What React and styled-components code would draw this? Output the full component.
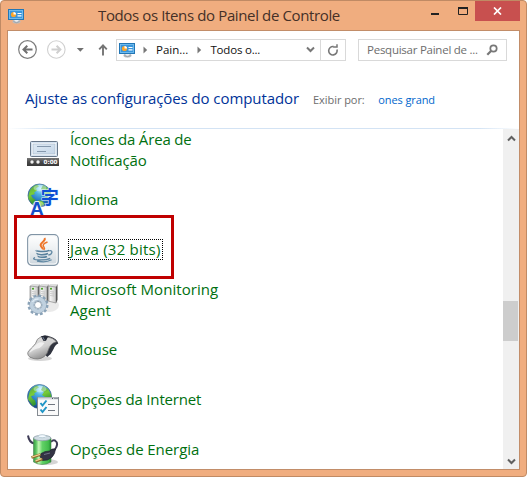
import React from "react";
import styled, { createGlobalStyle } from "styled-components";

const Global = createGlobalStyle`
  *, *::before, *::after { box-sizing: border-box; }
  html, body { margin: 0; padding: 0; background: #fff; overflow: hidden; }
  body { font-family: "Open Sans", "Noto Sans", sans-serif; }
  svg { display: block; flex: none; }
`;

const Window = styled.div`
  position: relative;
  width: 527px;
  height: 477px;
  display: flex;
  flex-direction: column;
  background: #f0ad7f;
  border: 1px solid #c08a64;
  border-radius: 4px;
  padding: 0 6px 6px 6px;
`;
const TitleBar = styled.header`
  height: 29px;
  flex: none;
  display: flex;
  align-items: flex-start;
  padding-left: 1px;
`;
const TitleIcon = styled.div`
  padding-top: 7px;
  width: 16px;
`;
const Title = styled.h1`
  margin: 0 0 0 74px;
  width: 322px;
  flex: none;
  font-size: 15px;
  font-weight: 400;
  line-height: 20px;
  padding-top: 4px;
  letter-spacing: -0.37px;
  white-space: nowrap;
  color: #453027;
`;
const Caption = styled.button`
  border: 0;
  padding: 0;
  flex: none;
  width: ${(p) => p.$w}px;
  height: 20px;
  display: flex;
  align-items: center;
  justify-content: center;
  background: ${(p) => (p.$close ? "#c8504f" : "transparent")};
`;
const Client = styled.main`
  flex: 1;
  min-height: 0;
  display: flex;
  flex-direction: column;
  background: #fff;
  border: 1px solid #c28d69;
`;
const Toolbar = styled.nav`
  height: 37px;
  flex: none;
  display: flex;
  align-items: center;
  padding-left: 10px;
`;
const NavIcons = styled.div`
  width: 98px;
  height: 22px;
`;
const Address = styled.div`
  width: 230px;
  height: 22px;
  display: flex;
  align-items: center;
  border: 1px solid #d9d9d9;
  padding-left: 2px;
`;
const Separator = styled.div`
  margin-left: ${(p) => p.$before || 0}px;
  margin-right: 8px;
`;
const Crumb = styled.span`
  width: ${(p) => p.$w}px;
  font-size: 11.5px;
  line-height: 20px;
  letter-spacing: ${(p) => p.$track || 0}px;
  white-space: nowrap;
  color: #111;
`;
const Refresh = styled.div`
  width: 25px;
  height: 20px;
  margin-left: 5px;
  display: flex;
  align-items: center;
  justify-content: center;
  border-left: 1px solid #d9d9d9;
`;
const Search = styled.div`
  width: 149px;
  height: 22px;
  margin-left: 12px;
  padding: 0 8px;
  display: flex;
  align-items: center;
  justify-content: space-between;
  border: 1px solid #d9d9d9;
  font-size: 11.5px;
  letter-spacing: -0.25px;
  white-space: nowrap;
  color: #6d6d6d;
`;
const Heading = styled.section`
  height: 61px;
  flex: none;
  display: flex;
  align-items: baseline;
  padding: 19px 0 0 17px;
  white-space: nowrap;
  background: linear-gradient(90deg, #fff, #d3e3f4 8%, #d3e3f4 92%, #fff) bottom / 100% 1px no-repeat;
`;
const HeadingTitle = styled.h2`
  margin: 0;
  width: 288px;
  font-size: 15px;
  line-height: 22px;
  font-weight: 400;
  letter-spacing: -0.08px;
  color: #003399;
`;
const ViewLabel = styled.span`
  width: 65px;
  font-size: 11px;
  letter-spacing: -0.05px;
  color: #6d6d6d;
`;
const ViewValue = styled.span`
  width: 57px;
  height: 18px;
  display: flex;
  justify-content: flex-end;
  overflow: hidden;
  font-size: 11px;
  letter-spacing: -0.1px;
  color: #0066cc;
`;
const Content = styled.div`
  flex: 1;
  min-height: 0;
  display: flex;
  justify-content: space-between;
  overflow: hidden;
`;
const List = styled.ul`
  list-style: none;
  margin: -4px 0 0;
  padding: 0 0 0 19px;
`;
const Item = styled.li`
  height: 50px;
  display: flex;
  align-items: center;
  gap: 9px;
`;
const ItemIcon = styled.div`
  width: 32px;
  height: 32px;
  margin-top: ${(p) => p.$dy || 0}px;
`;
const ItemLabel = styled.span`
  padding: 0 2px;
  margin-top: ${(p) => (p.$single ? -2 : 0)}px;
  font-size: 15px;
  line-height: 21px;
  letter-spacing: ${(p) => p.$track || 0}px;
  white-space: pre;
  color: #00700f;
  outline: ${(p) => (p.$focused ? "1px dotted #000" : "none")};
  outline-offset: -1px;
`;
const ScrollBar = styled.div`
  width: 16px;
  height: 100%;
  display: flex;
  flex-direction: column;
  align-items: center;
  justify-content: space-between;
  padding: 6px 0 4px;
  background: #f0f0f0;
`;
const Track = styled.div`
  flex: 1;
  width: 100%;
  padding: 159px 1px 0 0;
`;
const Thumb = styled.div`
  height: 40px;
  background: #cdcdcd;
`;
const Highlight = styled.div`
  position: absolute;
  left: 13px;
  top: 214px;
  width: 160px;
  height: 64px;
  border: 3px solid #c00000;
`;

const PanelIcon = () => (
  <svg width="17" height="16" viewBox="0 0 17 16">
    <ellipse cx="8.5" cy="13.5" rx="4" ry="2" fill="#b9bdc2" />
    <path d="M6.5 10h4v3q-2 1.5-4 0z" fill="#eceff2" />
    <rect x=".5" y="1.5" width="15" height="10" fill="#3a96dc" stroke="#2376b5" />
    <rect x="1.5" y="2.5" width="13" height="8" fill="none" stroke="#7bc4f2" strokeWidth=".8" />
    <circle cx="5.5" cy="6.5" r="2.6" fill="#f8a52b" />
    <path d="M5.5 3.9v2.6h2.6A2.6 2.6 0 0 0 5.5 3.9z" fill="#fff" />
    <path d="M9.5 5.5h4M9.5 7.8h4" stroke="#fff" strokeWidth="1.2" />
    <path d="M5.5 13.5q3 2.5 6 0" fill="none" stroke="#8d949b" strokeWidth=".6" />
  </svg>
);

const NavButtons = () => (
  <svg width="98" height="22" viewBox="0 0 98 22" fill="none">
    <circle cx="9.5" cy="10.5" r="8.8" stroke="#7c7c7c" strokeWidth="1.2" />
    <path d="M5.5 10.5h9M9.3 6.7 5.5 10.5l3.8 3.8" stroke="#707070" strokeWidth="2" />
    <circle cx="38.3" cy="10.5" r="8.8" stroke="#d0d0d0" strokeWidth="1.1" />
    <path d="M33.5 10.5h9M38.6 6.7l3.8 3.8-3.8 3.8" stroke="#cfcfcf" strokeWidth="2" />
    <path d="M58.8 9h7l-3.5 3.7z" fill="#707070" />
    <path d="M85 16.5V6.5M81.2 10.3 85 6.4l3.8 3.9" stroke="#747474" strokeWidth="1.9" />
  </svg>
);

const Arrow = () => (
  <svg width="5" height="8" viewBox="0 0 5 8"><path d="M.5.5 4.2 4 .5 7.5z" fill="#777" /></svg>
);

const Chevron = ({ up, color = "#606060" }) => (
  <svg width="9" height="7" viewBox="0 0 9 7" fill="none">
    <path d={up ? "M1 5.5 4.5 2 8 5.5" : "M1 1.5 4.5 5 8 1.5"} stroke={color} strokeWidth="2" />
  </svg>
);

const RefreshIcon = () => (
  <svg width="12" height="12" viewBox="0 0 12 12" fill="none">
    <path d="M9.9 5.5A4.2 4.2 0 1 1 6.6 2.6" stroke="#777" strokeWidth="1.6" />
    <path d="M6.2 2.9H10V.2" stroke="#777" strokeWidth="1.5" />
  </svg>
);

const SearchIcon = () => (
  <svg width="12" height="12" viewBox="0 0 12 12" fill="none" stroke="#777">
    <circle cx="7.5" cy="4.5" r="3.2" strokeWidth="1.7" />
    <path d="M5 7 1.3 10.7" strokeWidth="2.2" />
  </svg>
);

const TrayIcon = () => (
  <svg width="32" height="32" viewBox="0 0 32 32">
    <defs>
      <linearGradient id="trayScreen" x1="0" y1="0" x2="1" y2="1">
        <stop stopColor="#dfeaf4" /><stop offset="1" stopColor="#c5d6e8" />
      </linearGradient>
      <linearGradient id="trayBar" x1="0" y1="0" x2="0" y2="1">
        <stop stopColor="#777" /><stop offset=".5" stopColor="#494949" /><stop offset="1" stopColor="#393939" />
      </linearGradient>
    </defs>
    <rect x="3.5" y="7.5" width="27" height="15" rx="1" fill="#d4e2f0" stroke="#687789" />
    <rect x="5.5" y="9.5" width="23" height="11" fill="url(#trayScreen)" stroke="#f8fbfe" />
    <rect x="6" y="10" width="22" height="10" fill="none" stroke="#9fb0c2" strokeWidth=".5" />
    <path d="M10 12.5h14M10 17.5h9" stroke="#8497ac" />
    <rect y="24" width="32" height="8" fill="url(#trayBar)" />
    <circle cx="5" cy="28" r="1.7" fill="#f1f1f1" /><circle cx="11" cy="28" r="1.7" fill="#f1f1f1" />
    <text x="16.5" y="30.2" fontFamily="DejaVu Sans" fontWeight="700" fontSize="5.8" textLength="14" lengthAdjust="spacingAndGlyphs" fill="#fff">0:00</text>
  </svg>
);

const Globe = ({ id, r = 11.5 }) => (
  <g>
    <defs>
      <radialGradient id={id} cx=".55" cy=".2" r=".9">
        <stop stopColor="#c9f3ff" /><stop offset=".28" stopColor="#4fb0e2" />
        <stop offset=".65" stopColor="#206dba" /><stop offset="1" stopColor="#16336c" />
      </radialGradient>
      <linearGradient id={id + "Land"} x1="0" y1="0" x2=".3" y2="1">
        <stop stopColor="#4a9647" /><stop offset=".5" stopColor="#79cc39" /><stop offset="1" stopColor="#329332" />
      </linearGradient>
      <clipPath id={id + "Clip"}><circle cx="12.5" cy="12.5" r={r} /></clipPath>
    </defs>
    <circle cx="12.5" cy="12.5" r={r} fill={`url(#${id})`} stroke="#3c638d" strokeWidth=".7" />
    <g clipPath={`url(#${id}Clip)`} fill={`url(#${id}Land)`}>
      <path d="M2 10Q3 4 10 1.5l2 1.7-3 2.3 1 2-3 2 1 1.5-4 1.2 2 3 2 1 1 4-3 2-5-7z" />
      <path d="M16 2l5 3 4 7-1 6-5-1-1-4-3-2 2-3-3-2z" />
      <path d="M11 17l4 1 3 3-5 3-2-3z" />
    </g>
    <ellipse cx="13" cy="5" rx="6.5" ry="3.2" fill="#e8fcff" opacity=".42" />
  </g>
);

const LanguageIcon = () => (
  <svg width="32" height="32" viewBox="0 0 32 32" overflow="visible">
    <Globe id="languageGlobe" />
    <circle cx="11" cy="25" r="7" fill="#fff" opacity=".35" />
    <text x="3" y="31.7" fontFamily="Liberation Sans" fontWeight="700" fontSize="19" stroke="#fff" strokeWidth="1.4" paintOrder="stroke" fill="#1650c9">A</text>
    <text x="13.8" y="20.5" fontFamily="Noto Sans CJK JP" fontWeight="700" fontSize="18" stroke="#e5f3ff" strokeWidth="1" paintOrder="stroke" fill="#0c4fd4">字</text>
  </svg>
);

const JavaIcon = () => (
  <svg width="32" height="32" viewBox="0 0 32 32" fill="none">
    <defs><linearGradient id="javaTile" x1="0" y1="0" x2="0" y2="1"><stop stopColor="#fff" /><stop offset=".45" stopColor="#eef1f3" /><stop offset="1" stopColor="#cbd5dc" /></linearGradient></defs>
    <rect x=".7" y=".7" width="30.6" height="30.6" rx="4" fill="url(#javaTile)" stroke="#8094a5" strokeWidth="1.2" />
    <rect x="2" y="2" width="28" height="28" rx="3" stroke="#f7f9fa" />
    <path d="M17.5 4c2.3 3-5.8 4.8-3.6 8 .7 1.3 1.8 2.1 2.1 3.4" stroke="#ed7428" strokeWidth="1.9" />
    <path d="M20.5 8c-4 1.5-5.5 3.2-3.5 5.2 1 1 .6 1.7-.3 2.8" stroke="#ed7428" strokeWidth="1.5" />
    <path d="M9.5 16.4c-2 1 9.5 1.8 12.8 0M10.2 19c-1 2 7.5 2.2 10.8.5M11.2 21.8c-.6 2 6.5 1.9 8.8.7" stroke="#58819d" strokeWidth="1.5" />
    <path d="M22.3 16.8c4-1 3.2 4-1 4.2M8 23.7c-6 2.5 10 3.2 15.2.6M10 27c5 1.2 11.5.5 14.6-1.2" stroke="#6189a4" strokeWidth="1.3" />
  </svg>
);

const Tower = ({ x }) => (
  <g transform={`translate(${x} 0)`}>
    <path d="M0 3 2 1h7l-1 3z" fill="#ddd" />
    <path d="M0 3 8 4v16l-8-2z" fill="url(#tower)" stroke="#8a8a8a" strokeWidth=".7" />
    <path d="m8 4 1.5-3v16L8 20z" fill="#555" />
    <path d="M2 8.5l4 .5M2 10.5l4 .5M2 12.5l4 .5" stroke="#aaa" strokeWidth=".5" />
    <rect x="2" y="4.8" width="2" height="1.8" fill="#4fa52d" />
  </g>
);

const MonitoringIcon = () => (
  <svg width="32" height="34" viewBox="0 0 32 34">
    <defs><linearGradient id="tower"><stop stopColor="#b1b1b1" /><stop offset=".3" stopColor="#f3f3f3" /><stop offset="1" stopColor="#c7c7c7" /></linearGradient></defs>
    <ellipse cx="22" cy="22" rx="10" ry="7" fill="#aaa" opacity=".25" />
    <Tower x="3" /><Tower x="12" /><Tower x="21" />
    <circle cx="11" cy="22" r="9" fill="none" stroke="#8ba3b8" strokeWidth="3" strokeDasharray="2.8 1.91" />
    <circle cx="11" cy="22" r="6.3" fill="none" stroke="#879eb4" strokeWidth="4.7" />
    <circle cx="11" cy="22" r="6.3" fill="none" stroke="#c0d1df" strokeWidth="3.8" />
    <circle cx="11" cy="22" r="3.5" fill="#fff" stroke="#778fa5" strokeWidth=".8" />
    <path d="M5.5 19q2-4 6-3" stroke="#eef7ff" fill="none" />
  </svg>
);

const MouseIcon = () => (
  <svg width="32" height="32" viewBox="0 0 32 32">
    <defs>
      <linearGradient id="mouseBody" x1=".2" y1="0" x2=".7" y2="1"><stop stopColor="#e2e2e2" /><stop offset=".5" stopColor="#d0d0d0" /><stop offset="1" stopColor="#7d7d7d" /></linearGradient>
    </defs>
    <ellipse cx="13" cy="24.5" rx="12" ry="2.6" fill="#888" opacity=".35" />
    <path d="M15 2.5Q18 .5 23 2.5q7 2 8.3 7-3 1-5 6-2 5-6 7.5l-3-3 6-10z" fill="#30343f" />
    <path d="M14.5 2.5Q9.5 4.5 8.5 9.5 6 13 2 16.5-1 20 3 23.2q8 4 14.5-.8Q20.5 20 21.7 15q2-6 7.8-7.3Q26 3.5 20.5 3L18 6.5z" fill="url(#mouseBody)" stroke="#6e6e6e" strokeWidth=".7" />
    <path d="M14 2.3 18 1.5l3 1.3-2 4-2.5.2z" fill="#252a36" />
    <path d="M15.8 3l1.8 3.2" stroke="#8795ab" strokeWidth=".8" />
    <path d="M10.5 9.5Q4 14 2.5 19q4-4 10-5 3-2 5-5-4-1.5-7 .5z" fill="#fff" opacity=".65" />
  </svg>
);

const InternetIcon = () => (
  <svg width="32" height="32" viewBox="0 0 32 32" fill="none">
    <Globe id="internetGlobe" r={12} />
    <rect x="10.5" y="13.5" width="21" height="18" fill="#fafafa" stroke="#858b92" />
    <path d="M11 14.5h20" stroke="#d2d6dc" strokeWidth="2" />
    <path d="M25 14.5h1M27.5 14.5h1M29.5 14.5h1" stroke="#4f5862" />
    <path d="m13.5 19 2 2.5 4-5M13.5 25.5l2 2.5 4-5" stroke="#2095c6" strokeWidth="2" />
    <path d="M21 20.5h7M21 26.5h7" stroke="#707680" />
  </svg>
);

const PowerIcon = () => (
  <svg width="32" height="32" viewBox="0 0 32 32" fill="none">
    <defs><linearGradient id="battery"><stop stopColor="#3a9a45" /><stop offset=".15" stopColor="#5dc663" /><stop offset=".3" stopColor="#c4f6b4" /><stop offset=".5" stopColor="#62d266" /><stop offset=".85" stopColor="#43bb4c" /><stop offset="1" stopColor="#208b30" /></linearGradient></defs>
    <ellipse cx="20" cy="28" rx="11" ry="3" fill="#888" opacity=".35" />
    <path d="M1 1.5Q2 8 7 9.5M24 8q2-2.5 4-1.5 4.5 3-.5 9.5" stroke="#3d3a55" strokeWidth="2" />
    <path d="M6.5 4v24q8.5 5 17.5 0V4z" fill="url(#battery)" stroke="#4e8852" strokeWidth=".6" />
    <ellipse cx="15.2" cy="4" rx="8.7" ry="2.7" fill="#cfdce3" stroke="#8898a4" strokeWidth=".7" />
    <ellipse cx="15.2" cy="2.2" rx="4" ry="1.5" fill="#f3faff" stroke="#a3b8c5" strokeWidth=".6" />
    <path d="M28.5 15q-4-1-6 2-5 0-8.5 2.5l-1 3 2.5 4 5-.5q5-2 7-6.5z" fill="#333344" stroke="#171a29" strokeWidth=".6" />
    <path d="m13.5 20.5-9 3M15.5 25l-7 2.5" stroke="#8d6728" strokeWidth="2.7" />
    <path d="m13 20.3-8 2.7M14.5 24.6l-6 2.2" stroke="#f0d391" strokeWidth="1.3" />
    <path d="m17 20.5 6-1.5" stroke="#71728a" />
  </svg>
);

const items = [
  { label: "Ícones da Área de\nNotificação", Icon: TrayIcon, track: -0.16 },
  { label: "Idioma", Icon: LanguageIcon, dy: -2 },
  { label: "Java (32 bits)", Icon: JavaIcon, track: 0.22, focused: true },
  { label: "Microsoft Monitoring\nAgent", Icon: MonitoringIcon, dy: -2, track: 0.05 },
  { label: "Mouse", Icon: MouseIcon, dy: -1 },
  { label: "Opções da Internet", Icon: InternetIcon, dy: -1, track: -0.16 },
  { label: "Opções de Energia", Icon: PowerIcon, dy: -1, track: -0.07 },
];

export default function App() {
  return (
    <>
      <Global />
      <Window>
        <TitleBar>
          <TitleIcon><PanelIcon /></TitleIcon>
          <Title>Todos os Itens do Painel de Controle</Title>
          <Caption $w={30} aria-label="Minimizar"><svg width="8" height="10"><path d="M0 8h8" stroke="#222" strokeWidth="2" /></svg></Caption>
          <Caption $w={25} aria-label="Maximizar"><svg width="10" height="8"><path d="M.5 1v6.5h9V1M0 1h10" fill="none" stroke="#222" /><path d="M0 1h10" stroke="#222" strokeWidth="2" /></svg></Caption>
          <Caption $w={45} $close aria-label="Fechar"><svg width="9" height="8"><path d="m1 .5 7 7m0-7-7 7" stroke="#fff" strokeWidth="1.7" /></svg></Caption>
        </TitleBar>
        <Client>
          <Toolbar>
            <NavIcons><NavButtons /></NavIcons>
            <Address>
              <PanelIcon />
              <Separator $before={7}><Arrow /></Separator>
              <Crumb $w={42}>Pain...</Crumb>
              <Separator><Arrow /></Separator>
              <Crumb $w={97} $track={-0.2}>Todos o...</Crumb>
              <Chevron color="#777" />
              <Refresh><RefreshIcon /></Refresh>
            </Address>
            <Search>Pesquisar Painel de ...<SearchIcon /></Search>
          </Toolbar>
          <Heading>
            <HeadingTitle>Ajuste as configurações do computador</HeadingTitle>
            <ViewLabel>Exibir por:</ViewLabel>
            <ViewValue>ones grand</ViewValue>
          </Heading>
          <Content>
            <List>
              {items.map(({ label, Icon, dy, track, focused }) => (
                <Item key={label}>
                  <ItemIcon $dy={dy}><Icon /></ItemIcon>
                  <ItemLabel $focused={focused} $track={track} $single={!label.includes("\n")}>{label}</ItemLabel>
                </Item>
              ))}
            </List>
            <ScrollBar>
              <Chevron up />
              <Track><Thumb /></Track>
              <Chevron />
            </ScrollBar>
          </Content>
        </Client>
        <Highlight />
      </Window>
    </>
  );
}
